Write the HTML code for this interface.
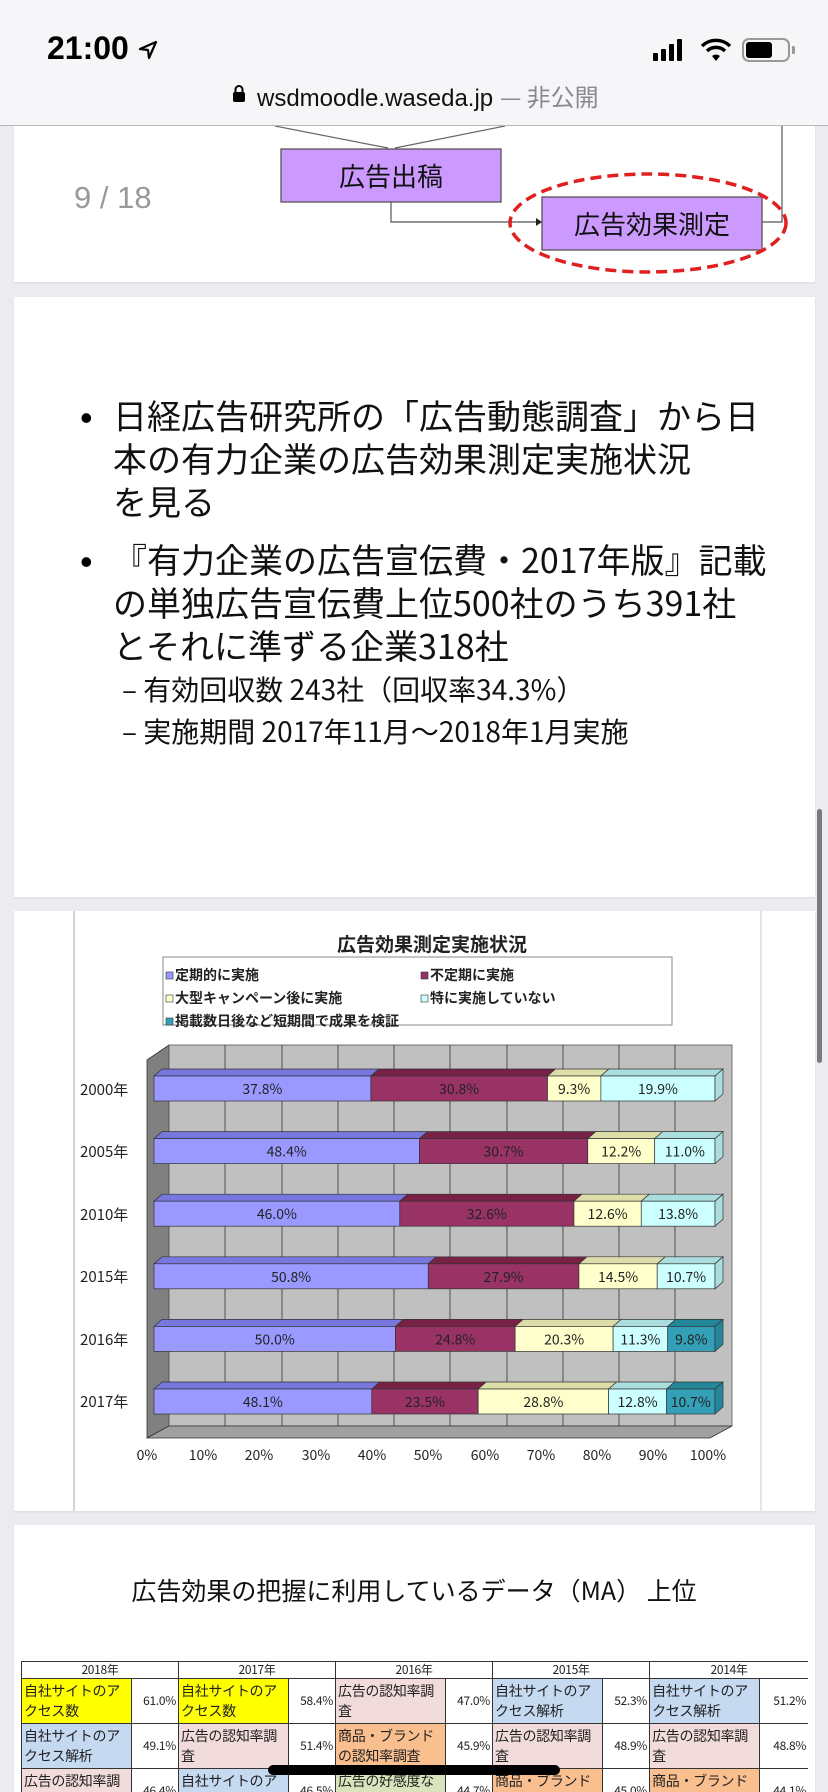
<!DOCTYPE html>
<html style="width:828px;height:1792px;overflow:hidden"><head><meta charset="utf-8">
<style>
*{margin:0;padding:0;box-sizing:border-box}
body{width:828px;height:1792px;overflow:hidden;background:#ececf0;font-family:"Liberation Sans","Noto Sans CJK JP",sans-serif;position:relative}
.abs{position:absolute}
.card{position:absolute;left:14px;width:801px;background:#fff;box-shadow:0 1px 2px rgba(0,0,0,.08)}
.jp{font-family:"Noto Sans CJK JP","Liberation Sans",sans-serif}
.bl{position:absolute;left:113px;font-size:34px;line-height:43px;color:#111;white-space:nowrap}
.sub{position:absolute;left:122px;font-size:28px;color:#111;white-space:nowrap}
.tw{position:absolute;left:21px;top:1661px;width:787px;height:131px;overflow:hidden}
table{border-collapse:collapse;width:787px;font-family:"Noto Sans CJK JP",sans-serif;table-layout:fixed}
td{border:1.5px solid #333;font-size:14px;line-height:20px;color:#222;padding:0 2px;vertical-align:middle;overflow:hidden;letter-spacing:-0.3px}
td.h{font-size:12px;line-height:14px;text-align:center;height:17px}
td.v{text-align:right;font-size:12px}
tr.r td{height:45px}
</style></head><body>
<div class="abs" style="left:0;top:0;width:828px;height:126px;background:#f6f5f8;border-bottom:1px solid #b8b8bc;z-index:5">
  <div class="abs" style="left:47px;top:30px;font-size:32px;font-weight:bold;color:#000">21:00</div>
  <svg class="abs" style="left:138px;top:40px" width="20" height="20" viewBox="0 0 20 20"><path d="M18 2 L2 9 L10 10 L11 18 Z" fill="none" stroke="#000" stroke-width="2.2" stroke-linejoin="round"/></svg>
  <svg class="abs" style="left:652px;top:38px" width="40" height="24"><rect x="1" y="15" width="5" height="8" rx="1"/><rect x="9" y="11" width="5" height="12" rx="1"/><rect x="17" y="6" width="5" height="17" rx="1"/><rect x="25" y="1" width="5" height="22" rx="1"/></svg>
  <svg class="abs" style="left:700px;top:37px" width="32" height="26" viewBox="0 0 32 26"><path d="M2 9 A20 20 0 0 1 30 9" fill="none" stroke="#000" stroke-width="3.4"/><path d="M7 14 A13 13 0 0 1 25 14" fill="none" stroke="#000" stroke-width="3.4"/><path d="M12 19 A6 6 0 0 1 20 19 L16 24 Z" fill="#000"/></svg>
  <div class="abs" style="left:742px;top:38px;width:48px;height:24px;border:2px solid #999;border-radius:7px"></div>
  <div class="abs" style="left:746px;top:42px;width:26px;height:16px;background:#000;border-radius:3px"></div>
  <div class="abs" style="left:792px;top:46px;width:3px;height:8px;background:#999;border-radius:0 2px 2px 0"></div>
  <svg class="abs" style="left:232px;top:84px" width="14" height="19"><path d="M3.5 8 V5.5 A3.5 3.5 0 0 1 10.5 5.5 V8" fill="none" stroke="#000" stroke-width="2"/><rect x="1" y="8" width="12" height="10" rx="2"/></svg>
  <div class="abs" style="left:257px;top:78px;font-size:24px;color:#111;white-space:nowrap">wsdmoodle.waseda.jp <span class="jp" style="color:#8a8a8e">— 非公開</span></div>
</div>
<div class="card" style="top:0;height:282px"></div>
<div class="abs" style="left:74px;top:180px;font-size:31px;color:#999">9 / 18</div>
<svg class="abs" style="left:0;top:126px" width="828" height="156">
  <line x1="275" y1="0" x2="388" y2="22" stroke="#666" stroke-width="1.2"/>
  <line x1="505" y1="0" x2="395" y2="22" stroke="#666" stroke-width="1.2"/>
  <rect x="281" y="23" width="220" height="53" fill="#cc99ff" stroke="#555" stroke-width="1.3"/>
  <polyline points="391,76 391,96 536,96" fill="none" stroke="#555" stroke-width="1.2"/>
  <path d="M536 92 L542 96 L536 100Z" fill="#222"/>
  <rect x="542" y="71" width="220" height="53" fill="#cc99ff" stroke="#555" stroke-width="1.3"/>
  <polyline points="762,96 782,96 782,0" fill="none" stroke="#555" stroke-width="1.2"/>
  <ellipse cx="648" cy="97" rx="138" ry="49" fill="none" stroke="#e02020" stroke-width="3.5" stroke-dasharray="11 6"/>
  <text x="391" y="60" font-size="26" text-anchor="middle" fill="#111" font-family="Noto Sans CJK JP">広告出稿</text>
  <text x="652" y="108" font-size="26" text-anchor="middle" fill="#111" font-family="Noto Sans CJK JP">広告効果測定</text>
</svg>
<div class="card" style="top:297px;height:600px"></div>
<div class="abs" style="left:80px;top:396px;font-size:36px;line-height:43px">•</div>
<div class="bl jp" style="top:393px">日経広告研究所の「広告動態調査」から日<br>本の有力企業の広告効果測定実施状況<br>を見る</div>
<div class="abs" style="left:80px;top:540px;font-size:36px;line-height:43px">•</div>
<div class="bl jp" style="top:537px">『有力企業の広告宣伝費・2017年版』記載<br>の単独広告宣伝費上位500社のうち391社<br>とそれに準ずる企業318社</div>
<div class="sub jp" style="top:669px">–  有効回収数   243社（回収率34.3%）</div>
<div class="sub jp" style="top:711px">–  実施期間   2017年11月～2018年1月実施</div>
<div class="abs" style="left:817px;top:809px;width:5px;height:254px;background:#7a7a7a;border-radius:3px;z-index:6"></div>
<div class="card" style="top:911px;height:600px"></div>
<svg class="abs" style="left:0;top:0" width="828" height="1520" font-family="Noto Sans CJK JP,Liberation Sans,sans-serif">
  <line x1="74" y1="911" x2="74" y2="1511" stroke="#aaa"/><line x1="761" y1="911" x2="761" y2="1511" stroke="#ccc"/>
  <text x="432" y="951" font-size="19" text-anchor="middle" fill="#222" font-weight="bold">広告効果測定実施状況</text>
  <rect x="163" y="957" width="509" height="68" fill="#fff" stroke="#888"/>
  <g font-size="14" fill="#222" font-weight="bold">
   <rect x="166" y="972" width="7" height="7" fill="#9999ff" stroke="#333" stroke-width=".6"/><text x="175" y="980">定期的に実施</text>
   <rect x="421" y="972" width="7" height="7" fill="#993366" stroke="#333" stroke-width=".6"/><text x="430" y="980">不定期に実施</text>
   <rect x="166" y="995" width="7" height="7" fill="#ffffcc" stroke="#333" stroke-width=".6"/><text x="175" y="1003">大型キャンペーン後に実施</text>
   <rect x="421" y="995" width="7" height="7" fill="#ccffff" stroke="#333" stroke-width=".6"/><text x="430" y="1003">特に実施していない</text>
   <rect x="166" y="1018" width="7" height="7" fill="#33a0b8" stroke="#333" stroke-width=".6"/><text x="175" y="1026">掲載数日後など短期間で成果を検証</text>
  </g>
  <polygon points="147,1060 169,1045 169,1426 147,1438" fill="#808080" stroke="#333" stroke-width=".8"/>
  <rect x="169" y="1045" width="563" height="381" fill="#c0c0c0" stroke="#555" stroke-width=".8"/>
  <polygon points="147,1438 169,1426 732,1426 710,1438" fill="#a0a0a0" stroke="#333" stroke-width=".8"/>
  <g stroke="#333" stroke-width=".8">
   <line x1="225" y1="1045" x2="225" y2="1426"/><line x1="282" y1="1045" x2="282" y2="1426"/><line x1="338" y1="1045" x2="338" y2="1426"/><line x1="394" y1="1045" x2="394" y2="1426"/><line x1="450" y1="1045" x2="450" y2="1426"/><line x1="507" y1="1045" x2="507" y2="1426"/><line x1="563" y1="1045" x2="563" y2="1426"/><line x1="619" y1="1045" x2="619" y2="1426"/><line x1="675" y1="1045" x2="675" y2="1426"/>
  </g>
  <g id="bars" font-size="14" text-anchor="middle" fill="#222" stroke="#333" stroke-width=".7"></g>
  <g font-size="15" fill="#222">
   <text x="80" y="1095">2000年</text><text x="80" y="1157">2005年</text><text x="80" y="1220">2010年</text><text x="80" y="1282">2015年</text><text x="80" y="1345">2016年</text><text x="80" y="1407">2017年</text>
  </g>
  <g font-size="14" fill="#222" text-anchor="middle">
   <text x="147" y="1460">0%</text><text x="203" y="1460">10%</text><text x="259" y="1460">20%</text><text x="316" y="1460">30%</text><text x="372" y="1460">40%</text><text x="428" y="1460">50%</text><text x="485" y="1460">60%</text><text x="541" y="1460">70%</text><text x="597" y="1460">80%</text><text x="653" y="1460">90%</text><text x="708" y="1460">100%</text>
  </g>
</svg>
<div class="card" style="top:1525px;height:267px"></div>
<div class="abs jp" style="left:0;width:828px;top:1572px;text-align:center;font-size:25px;color:#111">広告効果の把握に利用しているデータ（MA） 上位</div>
<div class="tw"><table>
<colgroup><col style="width:110px"><col style="width:47px"><col style="width:110px"><col style="width:47px"><col style="width:110px"><col style="width:47px"><col style="width:110px"><col style="width:47px"><col style="width:110px"><col style="width:49px"></colgroup>
<tr><td class="h" colspan="2">2018年</td><td class="h" colspan="2">2017年</td><td class="h" colspan="2">2016年</td><td class="h" colspan="2">2015年</td><td class="h" colspan="2">2014年</td></tr>
<tr class="r"><td style="background:#ffff00">自社サイトのアクセス数</td><td class="v">61.0%</td><td style="background:#ffff00">自社サイトのアクセス数</td><td class="v">58.4%</td><td style="background:#f2dcdb">広告の認知率調査</td><td class="v">47.0%</td><td style="background:#c5d9f1">自社サイトのアクセス解析</td><td class="v">52.3%</td><td style="background:#c5d9f1">自社サイトのアクセス解析</td><td class="v">51.2%</td></tr>
<tr class="r"><td style="background:#c5d9f1">自社サイトのアクセス解析</td><td class="v">49.1%</td><td style="background:#f2dcdb">広告の認知率調査</td><td class="v">51.4%</td><td style="background:#fabf8f">商品・ブランドの認知率調査</td><td class="v">45.9%</td><td style="background:#f2dcdb">広告の認知率調査</td><td class="v">48.9%</td><td style="background:#f2dcdb">広告の認知率調査</td><td class="v">48.8%</td></tr>
<tr class="r"><td style="background:#f2dcdb">広告の認知率調査</td><td class="v">46.4%</td><td style="background:#c5d9f1">自社サイトのアクセス解析</td><td class="v">46.5%</td><td style="background:#d8e4bc">広告の好感度など</td><td class="v">44.7%</td><td style="background:#fabf8f">商品・ブランドの認知率調査</td><td class="v">45.0%</td><td style="background:#fabf8f">商品・ブランドの認知率調査</td><td class="v">44.1%</td></tr>
</table></div>
<div class="abs" style="left:268px;top:1765px;width:292px;height:10px;background:#000;border-radius:5px;z-index:9"></div>
<script>
var rows=[[37.8,30.8,9.3,19.9,0],[48.4,30.7,12.2,11.0,0],[46.0,32.6,12.6,13.8,0],[50.8,27.9,14.5,10.7,0],[50.0,24.8,20.3,11.3,9.8],[48.1,23.5,28.8,12.8,10.7]];
var cols=["#9999ff","#993366","#ffffcc","#ccffff","#33a0b8"],tops=["#7777dd","#772244","#ddddaa","#aadddd","#228899"];
var g=document.getElementById('bars'),s='';
rows.forEach(function(r,i){var tot=r.reduce(function(a,b){return a+b},0);var cy=1076+i*62.6,x=154,W=561,h=25;
r.forEach(function(v,j){if(!v)return;var w=v/tot*W;
s+='<polygon points="'+x+','+cy+' '+(x+8)+','+(cy-7)+' '+(x+w+8)+','+(cy-7)+' '+(x+w)+','+cy+'" fill="'+tops[j]+'"/>';
s+='<rect x="'+x+'" y="'+cy+'" width="'+w+'" height="'+h+'" fill="'+cols[j]+'"/>';
s+='<text x="'+(x+w/2)+'" y="'+(cy+18)+'" stroke="none">'+v.toFixed(1)+'%</text>';x+=w;});
var last=r[4]?tops[4]:tops[3];
s+='<polygon points="'+x+','+cy+' '+(x+8)+','+(cy-7)+' '+(x+8)+','+(cy+h-7)+' '+x+','+(cy+h)+'" fill="'+last+'"/>';});
g.innerHTML=s;
</script>
</body></html>
